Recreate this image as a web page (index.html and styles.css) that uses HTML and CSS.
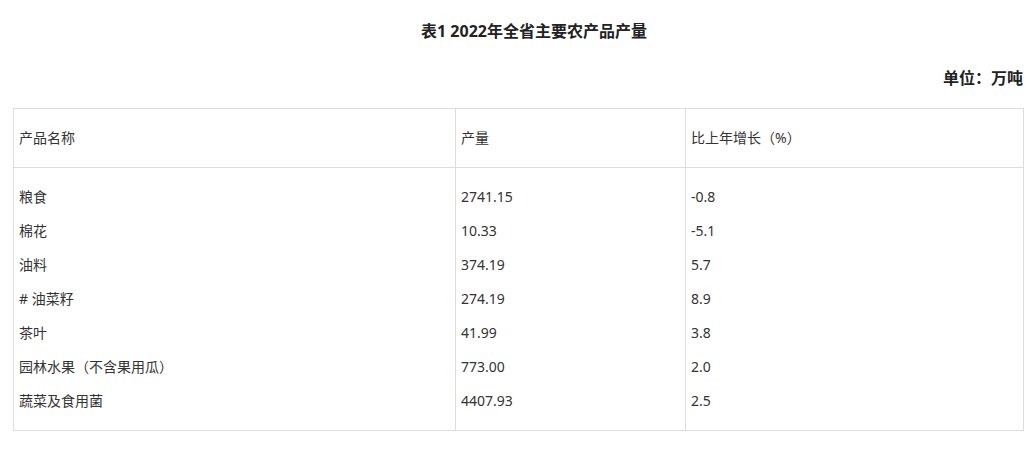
FILE: index.html
```html
<!DOCTYPE html>
<html lang="zh-CN">
<head>
<meta charset="utf-8">
<title>表1 2022年全省主要农产品产量</title>
<link rel="stylesheet" href="styles.css">
</head>
<body>
<div class="page">
  <p class="title">表1 2022年全省主要农产品产量</p>
  <p class="unit">单位：万吨</p>
  <table class="data">
    <colgroup>
      <col class="c1">
      <col class="c2">
      <col class="c3">
    </colgroup>
    <thead>
      <tr>
        <th>产品名称</th>
        <th>产量</th>
        <th>比上年增长（%）</th>
      </tr>
    </thead>
    <tbody>
      <tr>
        <td>
          <div class="line">粮食</div>
          <div class="line">棉花</div>
          <div class="line">油料</div>
          <div class="line">#&nbsp;油菜籽</div>
          <div class="line">茶叶</div>
          <div class="line">园林水果（不含果用瓜）</div>
          <div class="line">蔬菜及食用菌</div>
        </td>
        <td>
          <div class="line">2741.15</div>
          <div class="line">10.33</div>
          <div class="line">374.19</div>
          <div class="line">274.19</div>
          <div class="line">41.99</div>
          <div class="line">773.00</div>
          <div class="line">4407.93</div>
        </td>
        <td>
          <div class="line">-0.8</div>
          <div class="line">-5.1</div>
          <div class="line">5.7</div>
          <div class="line">8.9</div>
          <div class="line">3.8</div>
          <div class="line">2.0</div>
          <div class="line">2.5</div>
        </td>
      </tr>
    </tbody>
  </table>
</div>
</body>
</html>
```

FILE: styles.css
```css
html, body {
  margin: 0;
  padding: 0;
  background: #fff;
}

body {
  font-family: "Noto Sans", "Noto Sans CJK SC", sans-serif;
  color: #333;
  font-size: 14px;
}

.page {
  width: 1010px;
  margin-left: 13px;
}

.title {
  margin: 19px 0 0;
  line-height: 24px;
  font-size: 16px;
  font-weight: bold;
  text-align: center;
  text-indent: 2em;
  color: #222;
}

.unit {
  margin: 23px 0 0;
  line-height: 24px;
  font-size: 16px;
  font-weight: bold;
  text-align: right;
  color: #222;
}

.data {
  margin-top: 18px;
  width: 1010px;
  border-collapse: collapse;
  table-layout: fixed;
}

.c1 { width: 442px; }
.c2 { width: 230px; }
.c3 { width: 338px; }

.data th,
.data td {
  border: 1px solid #ddd;
  text-align: left;
  vertical-align: top;
  font-weight: normal;
  padding: 0 5px;
}

.data th {
  height: 58px;
  vertical-align: middle;
  line-height: 20px;
}

.data td {
  padding-top: 12px;
  padding-bottom: 12px;
}

.line {
  line-height: 34px;
  white-space: nowrap;
}
```
